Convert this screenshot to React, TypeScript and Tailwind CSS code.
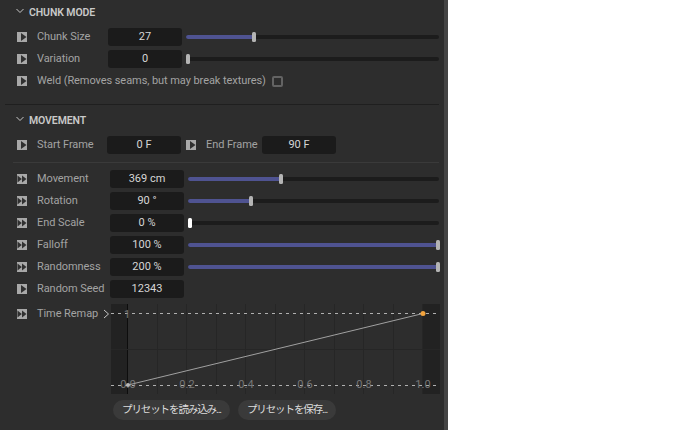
const fontStack = "font-['Roboto','Noto_Sans_CJK_JP',sans-serif]";

function KeyIcon() {
  return (
    <svg width="10" height="10" viewBox="0 0 10 10" className="shrink-0">
      <rect width="10" height="10" fill="#a8a8a8" />
      <path d="M4 1 L9.5 5 L4 9 Z" fill="#303030" />
    </svg>
  );
}

function DoubleKeyIcon() {
  return (
    <svg width="10" height="10" viewBox="0 0 10 10" className="shrink-0">
      <rect width="10" height="10" fill="#a8a8a8" />
      <path d="M0.5 1.5 L4.8 5 L0.5 8.5 Z" fill="#303030" />
      <path d="M5 1.5 L9.5 5 L5 8.5 Z" fill="#303030" />
    </svg>
  );
}

function Chevron() {
  return (
    <svg width="8" height="6" viewBox="0 0 8 6" className="mb-[2px] shrink-0">
      <path d="M0.5 1 L4 4.5 L7.5 1" fill="none" stroke="#c8c8c8" strokeWidth="1" />
    </svg>
  );
}

function Label({ text, className }: { text: string; className: string }) {
  return <span className={`ml-[10px] shrink-0 whitespace-nowrap text-[11px] tracking-[-0.07px] text-[#a3a3a3] ${className}`}>{text}</span>;
}

function Field({ value }: { value: string }) {
  return (
    <div className="h-[18px] w-[74px] shrink-0 rounded-[3px] bg-[#1b1b1b] text-center text-[11px] leading-[18px] text-[#d6d6d6]">
      {value}
    </div>
  );
}

function Slider({ pct, white }: { pct: number; white?: boolean }) {
  return (
    <div className="relative h-[4px] flex-1 rounded-full bg-[#1c1c1c]">
      <div className="h-full rounded-full bg-[#4f5391]" style={{ width: `${pct}%` }} />
      <div
        className={`absolute top-[-3px] h-[10px] w-[4px] -translate-x-1/2 rounded-[1.5px] ${white ? 'bg-white' : 'bg-[#b4b4b4]'}`}
        style={{ left: `${pct}%` }}
      />
    </div>
  );
}

function SectionHeader({ title }: { title: string }) {
  return (
    <div className="flex h-[14px] items-center pl-[16px]">
      <Chevron />
      <span className="ml-[5px] pt-[2px] text-[10.5px] font-semibold uppercase tracking-[-0.1px] text-[#c9c9c9]">{title}</span>
    </div>
  );
}

function ParamRow({ label, value, pct, white }: { label: string; value: string; pct?: number; white?: boolean }) {
  return (
    <div className="flex h-[22px] items-center pl-[17px] pr-[5px]">
      {pct === undefined ? <KeyIcon /> : <DoubleKeyIcon />}
      <Label text={label} className="w-[73px]" />
      <Field value={value} />
      {pct !== undefined && (
        <div className="ml-[4px] flex flex-1">
          <Slider pct={pct} white={white} />
        </div>
      )}
    </div>
  );
}

function Graph() {
  const xs = [1, 2, 3, 4, 5, 6, 7, 8, 9, 10].map(i => Math.round(17 + i * 29.5) - 0.5);
  const labels = ['0.0', '0.2', '0.4', '0.6', '0.8', '1.0'];
  return (
    <svg width="329" height="90" viewBox="0 0 329 90" className="block">
      <rect width="329" height="90" fill="#222222" />
      <rect x="17" width="295" height="90" fill="#2d2d2d" />
      {xs.map(x => (
        <line key={x} x1={x} x2={x} y1="0" y2="90" stroke="#262626" />
      ))}
      <line x1="16.5" x2="16.5" y1="0" y2="90" stroke="#0d0d0d" />
      <line x1="0" x2="329" y1="45.5" y2="45.5" stroke="#262626" />
      <line x1="0" x2="329" y1="9.5" y2="9.5" stroke="#b0b0b0" strokeDasharray="3 4" />
      <line x1="0" x2="329" y1="81.5" y2="81.5" stroke="#b0b0b0" strokeDasharray="3 4" />
      <text x="16" y="13.5" textAnchor="middle" fontSize="11" fill="#787878">1</text>
      {labels.map((l, i) => (
        <text key={l} x={17 + i * 59} y="84" textAnchor="middle" fontSize="11" fill="#787878">{l}</text>
      ))}
      <line x1="17" y1="81" x2="312" y2="9.5" stroke="#a0a0a0" strokeWidth="1" />
      <circle cx="17" cy="81" r="2" fill="#b8b8b8" />
      <circle cx="312" cy="9.5" r="2.5" fill="#f2a33c" />
    </svg>
  );
}

function PresetButton({ label, className }: { label: string; className: string }) {
  return (
    <button className={`h-[20px] whitespace-nowrap rounded-full bg-[#3a3a3a] text-center text-[10.5px] leading-[20px] tracking-[-1.1px] text-[#dcdcdc] ${className}`}>
      {label}
    </button>
  );
}

export default function App() {
  return (
    <div className={`flex h-[430px] w-[700px] overflow-hidden bg-white ${fontStack}`}>
      <div className="w-[444px] shrink-0 bg-[#2d2d2d] pt-[5px]">
        <SectionHeader title="Chunk Mode" />

        <div className="mt-[7px] flex h-[22px] items-center pl-[17px] pr-[5px]">
          <KeyIcon />
          <Label text="Chunk Size" className="w-[71px]" />
          <Field value="27" />
          <div className="ml-[4px] flex flex-1">
            <Slider pct={27} />
          </div>
        </div>
        <div className="flex h-[22px] items-center pl-[17px] pr-[5px]">
          <KeyIcon />
          <Label text="Variation" className="w-[71px]" />
          <Field value="0" />
          <div className="ml-[4px] flex flex-1">
            <Slider pct={0.8} />
          </div>
        </div>
        <div className="flex h-[22px] items-center pl-[17px]">
          <KeyIcon />
          <Label text="Weld (Removes seams, but may break textures)" className="" />
          <div className="ml-[6px] h-[11px] w-[11px] rounded-[2px] border-2 border-[#636363]" />
        </div>

        <div className="mx-[5px] mt-[12px] h-px bg-[#1f1f1f]" />

        <div className="mt-[8px]">
          <SectionHeader title="Movement" />
        </div>

        <div className="mt-[7px] flex h-[22px] items-center pl-[17px]">
          <KeyIcon />
          <Label text="Start Frame" className="w-[70px]" />
          <Field value="0 F" />
          <div className="ml-[5px]">
            <KeyIcon />
          </div>
          <Label text="End Frame" className="w-[56px]" />
          <Field value="90 F" />
        </div>

        <div className="ml-[13px] mr-[5px] mt-[6px] h-px bg-[#3a3a3a]" />

        <div className="mt-[5px]">
          <ParamRow label="Movement" value="369 cm" pct={37} />
          <ParamRow label="Rotation" value="90 °" pct={25} />
          <ParamRow label="End Scale" value="0 %" pct={0.8} white />
          <ParamRow label="Falloff" value="100 %" pct={99.6} />
          <ParamRow label="Randomness" value="200 %" pct={99.6} />
          <ParamRow label="Random Seed" value="12343" />
        </div>

        <div className="mt-[4px] flex pl-[17px]">
          <div className="mt-[5px] flex h-[10px] items-center">
            <DoubleKeyIcon />
            <Label text="Time Remap" className="w-[66px]" />
            <svg width="7" height="10" viewBox="0 0 7 10" className="shrink-0">
              <path d="M1 1 L5.5 5 L1 9" fill="none" stroke="#c8c8c8" strokeWidth="1" />
            </svg>
          </div>
          <div className="ml-[1px]">
            <Graph />
            <div className="ml-[2px] mt-[6px] flex gap-[8px]">
              <PresetButton label="プリセットを読み込み..." className="w-[117px]" />
              <PresetButton label="プリセットを保存..." className="w-[98px]" />
            </div>
          </div>
        </div>
      </div>
      <div className="w-[4px] shrink-0 bg-[#444444]" />
      <div className="flex-1 bg-white" />
    </div>
  );
}
